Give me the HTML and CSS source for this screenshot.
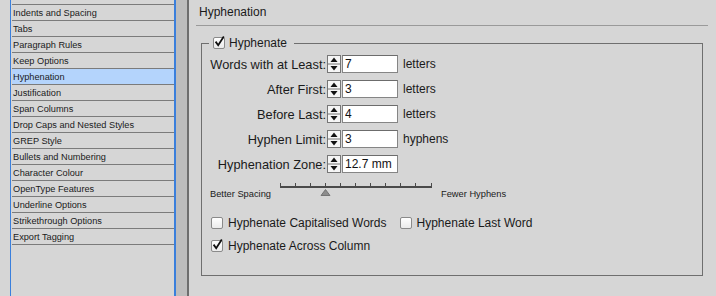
FILE: index.html
```html
<!DOCTYPE html>
<html lang="en">
<head>
    <meta charset="UTF-8">
    <title>Paragraph Style Options - Hyphenation</title>
    <link rel="stylesheet" href="styles.css">
</head>
<body>
    <div class="window">
        <ul class="categories">
            <li class="scrolled"></li>
            <li>Indents and Spacing</li>
            <li>Tabs</li>
            <li>Paragraph Rules</li>
            <li>Keep Options</li>
            <li class="selected">Hyphenation</li>
            <li>Justification</li>
            <li>Span Columns</li>
            <li>Drop Caps and Nested Styles</li>
            <li>GREP Style</li>
            <li>Bullets and Numbering</li>
            <li>Character Colour</li>
            <li>OpenType Features</li>
            <li>Underline Options</li>
            <li>Strikethrough Options</li>
            <li>Export Tagging</li>
        </ul>
        <div class="scrollbar"></div>

        <main class="panel">
            <h2 class="panel-title">Hyphenation</h2>

            <fieldset class="group">
                <legend>
                    <label class="check">
                        <span class="box"><svg viewBox="0 0 12 12"><path d="M2.6 5.6 L5.2 9.2 L10.8 0.6"/></svg></span>
                        Hyphenate
                    </label>
                </legend>

                <div class="fields">
                    <label>Words with at Least:</label>
                    <svg class="spinner" viewBox="0 0 14 18"><rect x="0.5" y="0.5" width="13" height="17"/><line x1="1" y1="9" x2="13" y2="9"/><path d="M7 2.5 L10.5 7 L3.5 7 Z"/><path d="M3.5 11 L10.5 11 L7 15.5 Z"/></svg>
                    <input type="text" value="7" readonly>
                    <span class="unit">letters</span>

                    <label>After First:</label>
                    <svg class="spinner" viewBox="0 0 14 18"><rect x="0.5" y="0.5" width="13" height="17"/><line x1="1" y1="9" x2="13" y2="9"/><path d="M7 2.5 L10.5 7 L3.5 7 Z"/><path d="M3.5 11 L10.5 11 L7 15.5 Z"/></svg>
                    <input type="text" value="3" readonly>
                    <span class="unit">letters</span>

                    <label>Before Last:</label>
                    <svg class="spinner" viewBox="0 0 14 18"><rect x="0.5" y="0.5" width="13" height="17"/><line x1="1" y1="9" x2="13" y2="9"/><path d="M7 2.5 L10.5 7 L3.5 7 Z"/><path d="M3.5 11 L10.5 11 L7 15.5 Z"/></svg>
                    <input type="text" value="4" readonly>
                    <span class="unit">letters</span>

                    <label>Hyphen Limit:</label>
                    <svg class="spinner" viewBox="0 0 14 18"><rect x="0.5" y="0.5" width="13" height="17"/><line x1="1" y1="9" x2="13" y2="9"/><path d="M7 2.5 L10.5 7 L3.5 7 Z"/><path d="M3.5 11 L10.5 11 L7 15.5 Z"/></svg>
                    <input type="text" value="3" readonly>
                    <span class="unit">hyphens</span>

                    <label>Hyphenation Zone:</label>
                    <svg class="spinner" viewBox="0 0 14 18"><rect x="0.5" y="0.5" width="13" height="17"/><line x1="1" y1="9" x2="13" y2="9"/><path d="M7 2.5 L10.5 7 L3.5 7 Z"/><path d="M3.5 11 L10.5 11 L7 15.5 Z"/></svg>
                    <input type="text" value="12.7 mm" readonly>
                    <span class="unit"></span>
                </div>

                <div class="slider">
                    <span class="slider-label">Better Spacing</span>
                    <svg class="track" viewBox="0 0 152 14">
                        <rect class="line" x="0" y="3" width="152" height="2"/>
                        <rect class="tick" x="0" y="0" width="1" height="4"/>
                        <rect class="tick" x="15" y="0" width="1" height="4"/>
                        <rect class="tick" x="30" y="0" width="1" height="4"/>
                        <rect class="tick" x="45" y="0" width="1" height="4"/>
                        <rect class="tick" x="60" y="0" width="1" height="4"/>
                        <rect class="tick" x="75" y="0" width="1" height="4"/>
                        <rect class="tick" x="90" y="0" width="1" height="4"/>
                        <rect class="tick" x="105" y="0" width="1" height="4"/>
                        <rect class="tick" x="120" y="0" width="1" height="4"/>
                        <rect class="tick" x="135" y="0" width="1" height="4"/>
                        <rect class="tick" x="151" y="0" width="1" height="4"/>
                        <path class="thumb" d="M45.5 6.5 L50 12.5 L41 12.5 Z"/>
                    </svg>
                    <span class="slider-label">Fewer Hyphens</span>
                </div>

                <div class="options">
                    <div class="option-row">
                        <label class="check">
                            <span class="box off"></span>
                            Hyphenate Capitalised Words
                        </label>
                        <label class="check">
                            <span class="box off"></span>
                            Hyphenate Last Word
                        </label>
                    </div>
                    <div class="option-row">
                        <label class="check">
                            <span class="box"><svg viewBox="0 0 12 12"><path d="M2.6 5.6 L5.2 9.2 L10.8 0.6"/></svg></span>
                            Hyphenate Across Column
                        </label>
                    </div>
                </div>
            </fieldset>
        </main>
    </div>
</body>
</html>
```

FILE: styles.css
```css
/* Reset */
* {
    margin: 0;
    padding: 0;
    box-sizing: border-box;
}

body {
    background: #d6d6d6;
    color: #1a1a1a;
    font-family: 'Liberation Sans', Arial, sans-serif;
    overflow: hidden;
}

.window {
    display: flex;
    height: 296px;
}

/* Category list */
.categories {
    list-style: none;
    width: 166px;
    margin-left: 10px;
    border-left: 1px solid #3a7fdc;
    border-right: 2px solid #3a7fdc;
    font-size: 9.2px;
    overflow: hidden;
}

.categories li {
    height: 16px;
    line-height: 16px;
    margin-left: 1px;
    padding-left: 1px;
    border-bottom: 1px solid #7b7b7b;
    white-space: nowrap;
}

/* list is scrolled: only the bottom edge of the row above shows */
.categories li.scrolled {
    margin-top: -11px;
}

.categories li.selected {
    background: #b4d4fc;
}

.scrollbar {
    width: 13px;
    background: #bdbdbd;
    border-right: 2px solid #6e6e6e;
}

/* Right panel */
.panel {
    flex: 1;
    padding: 0 8px 0 7px;
}

.panel-title {
    font-size: 12px;
    font-weight: normal;
    line-height: 24px;
    padding: 0 0 1px 3px;
    border-bottom: 1px solid #9a9a9a;
}

.group {
    margin: 10px 5px 0 5px;
    padding: 0 0 21px 0;
    border: 1px solid #6f6f6f;
    font-size: 12px;
}

.group legend {
    margin-left: 7px;
    padding: 0 7px 0 4px;
    line-height: 14px;
}

/* Checkboxes */
.check {
    display: flex;
    align-items: center;
    gap: 4px;
    white-space: nowrap;
}

.box {
    width: 12px;
    height: 12px;
    border: 1px solid #8a8a8a;
    border-radius: 2px;
    background: linear-gradient(#ffffff, #ebebeb);
    position: relative;
}

.box svg {
    position: absolute;
    left: -1px;
    top: -2px;
    width: 12px;
    height: 12px;
    overflow: visible;
}

.box svg path {
    fill: none;
    stroke: #111;
    stroke-width: 1.8;
}

/* Number fields */
.fields {
    display: grid;
    grid-template-columns: 125px 14px 57px auto;
    row-gap: 7px;
    align-items: center;
    margin-top: 5px;
}

.fields label {
    font-size: 12.8px;
    text-align: right;
    padding-right: 1px;
    white-space: nowrap;
}

.spinner {
    width: 14px;
    height: 18px;
    display: block;
}

.spinner rect {
    fill: #f5f5f5;
    stroke: #767676;
}

.spinner line {
    stroke: #767676;
}

.spinner path {
    fill: #111;
}

.fields input {
    width: 56px;
    height: 18px;
    margin-left: 1px;
    padding-left: 2px;
    border: 1px solid #858585;
    border-top-color: #6c6c6c;
    background: #fff;
    color: #111;
    font-family: 'Liberation Sans', Arial, sans-serif;
    font-size: 12px;
    outline: none;
}

.unit {
    padding-left: 5px;
}

/* Slider */
.slider {
    display: flex;
    align-items: flex-start;
    margin: 10px 0 0 8px;
}

.slider-label {
    font-size: 9.3px;
    line-height: 11px;
    padding-top: 6px;
    white-space: nowrap;
}

.track {
    width: 152px;
    height: 14px;
    margin: 0 9px 0 9px;
}

.track .line,
.track .tick {
    fill: #4a4a4a;
}

.track .thumb {
    fill: #8d8d8d;
    stroke: #666;
    stroke-width: 0.8;
}

/* Options */
.options {
    display: flex;
    flex-direction: column;
    gap: 7px;
    margin: 15px 0 0 9px;
}

.option-row {
    display: flex;
    gap: 13px;
    height: 16px;
    line-height: 16px;
}

.option-row .check {
    gap: 5px;
}
```
